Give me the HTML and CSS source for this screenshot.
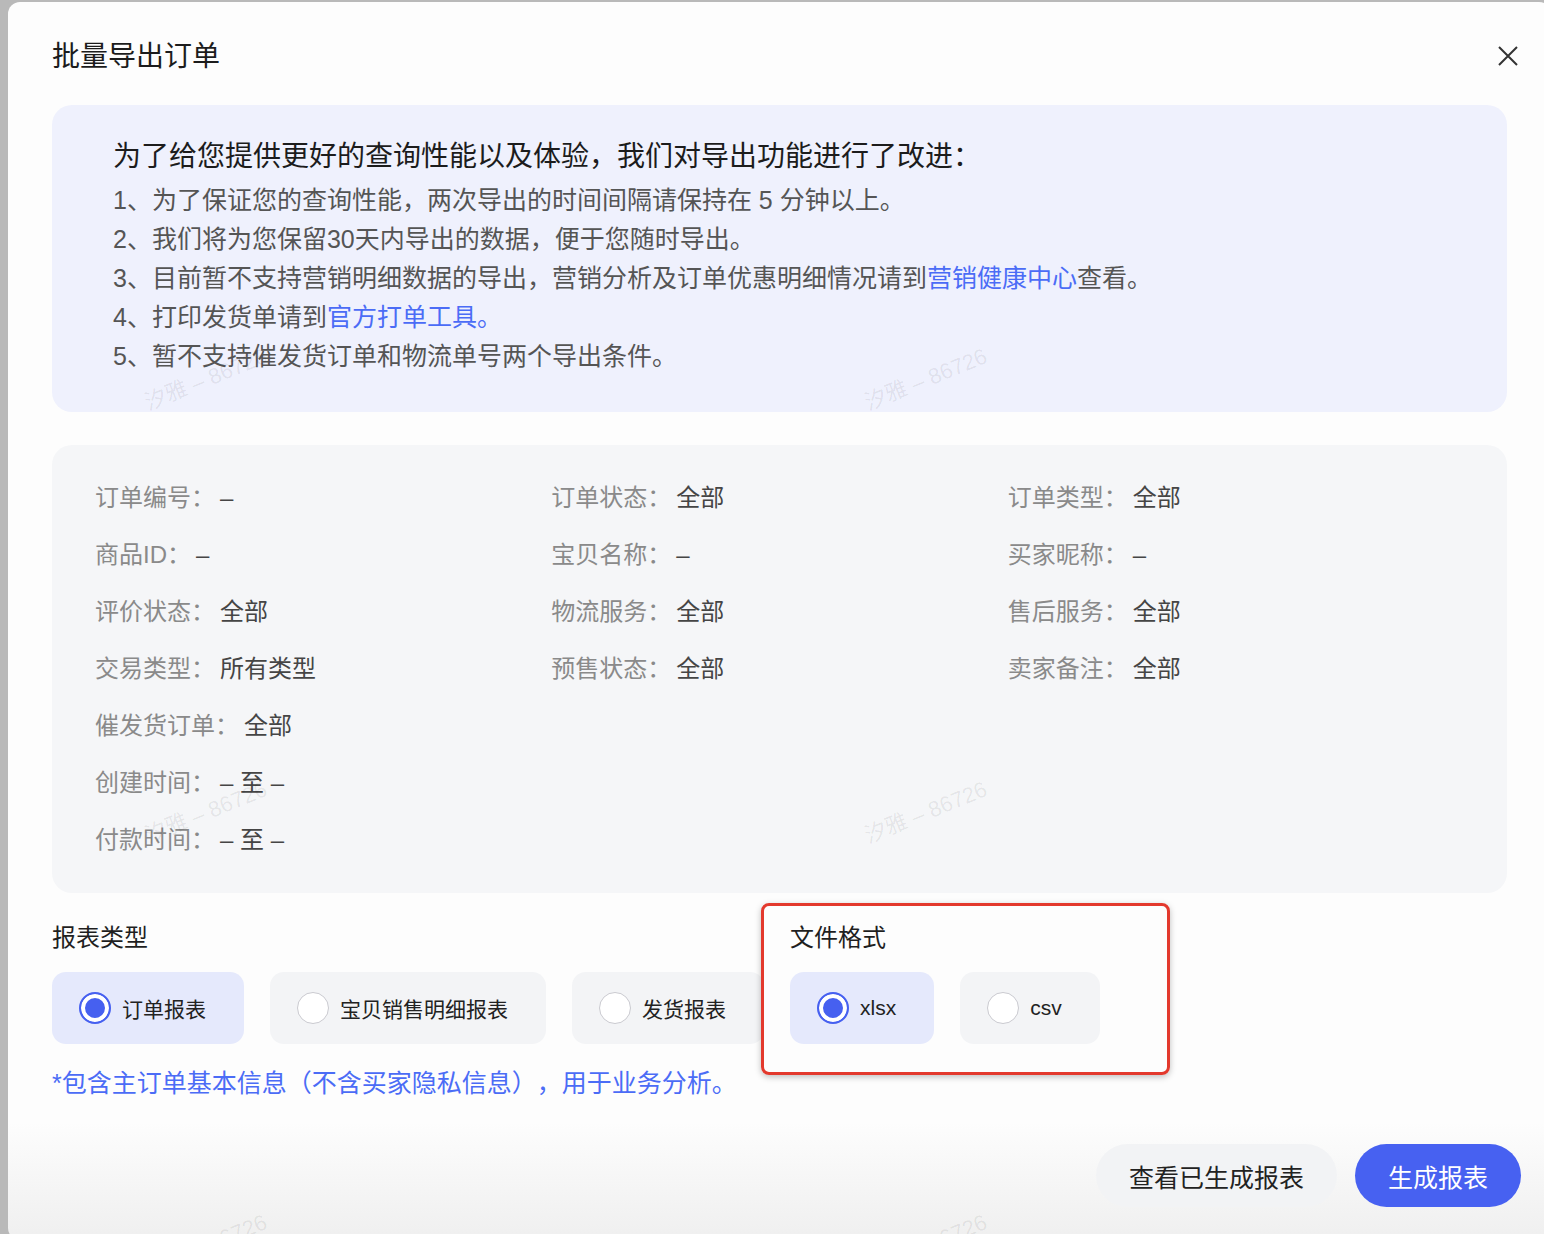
FILE: index.html
```html
<!DOCTYPE html>
<html lang="zh-CN">
  <head>
    <meta charset="UTF-8" />
    <meta name="viewport" content="width=device-width, initial-scale=1.0" />
    <title>批量导出订单</title>
    <link rel="stylesheet" href="styles.css">
  </head>
  <body>
    <div class="modal">
      <div class="modal-header">
        <h2 class="modal-title">批量导出订单</h2>
        <button class="close-btn" aria-label="关闭">
          <svg width="20" height="20" viewBox="0 0 20 20">
            <path d="M1 1 L19 19 M19 1 L1 19" stroke="#333" stroke-width="2" fill="none" />
          </svg>
        </button>
      </div>

      <div class="notice">
        <p class="notice-title">为了给您提供更好的查询性能以及体验，我们对导出功能进行了改进：</p>
        <ul class="notice-list">
          <li>1、为了保证您的查询性能，两次导出的时间间隔请保持在 5 分钟以上。</li>
          <li>2、我们将为您保留30天内导出的数据，便于您随时导出。</li>
          <li>3、目前暂不支持营销明细数据的导出，营销分析及订单优惠明细情况请到<a href="#">营销健康中心</a>查看。</li>
          <li>4、打印发货单请到<a href="#">官方打单工具。</a></li>
          <li>5、暂不支持催发货订单和物流单号两个导出条件。</li>
        </ul>
      </div>

      <div class="filters">
        <div class="filter-item"><span class="filter-label">订单编号：</span><span class="filter-value">–</span></div>
        <div class="filter-item"><span class="filter-label">订单状态：</span><span class="filter-value">全部</span></div>
        <div class="filter-item"><span class="filter-label">订单类型：</span><span class="filter-value">全部</span></div>
        <div class="filter-item"><span class="filter-label">商品ID：</span><span class="filter-value">–</span></div>
        <div class="filter-item"><span class="filter-label">宝贝名称：</span><span class="filter-value">–</span></div>
        <div class="filter-item"><span class="filter-label">买家昵称：</span><span class="filter-value">–</span></div>
        <div class="filter-item"><span class="filter-label">评价状态：</span><span class="filter-value">全部</span></div>
        <div class="filter-item"><span class="filter-label">物流服务：</span><span class="filter-value">全部</span></div>
        <div class="filter-item"><span class="filter-label">售后服务：</span><span class="filter-value">全部</span></div>
        <div class="filter-item"><span class="filter-label">交易类型：</span><span class="filter-value">所有类型</span></div>
        <div class="filter-item"><span class="filter-label">预售状态：</span><span class="filter-value">全部</span></div>
        <div class="filter-item"><span class="filter-label">卖家备注：</span><span class="filter-value">全部</span></div>
        <div class="filter-item full"><span class="filter-label">催发货订单：</span><span class="filter-value">全部</span></div>
        <div class="filter-item full"><span class="filter-label">创建时间：</span><span class="filter-value">– 至 –</span></div>
        <div class="filter-item full"><span class="filter-label">付款时间：</span><span class="filter-value">– 至 –</span></div>
      </div>

      <div class="options">
        <div class="option-group">
          <div class="group-label">报表类型</div>
          <div class="choice-row">
            <label class="choice selected"><span class="radio"></span>订单报表</label>
            <label class="choice"><span class="radio"></span>宝贝销售明细报表</label>
            <label class="choice"><span class="radio"></span>发货报表</label>
          </div>
        </div>
        <div class="option-group format-group">
          <div class="group-label">文件格式</div>
          <div class="choice-row">
            <label class="choice selected"><span class="radio"></span>xlsx</label>
            <label class="choice"><span class="radio"></span>csv</label>
          </div>
        </div>
      </div>

      <p class="report-hint">*包含主订单基本信息（不含买家隐私信息），用于业务分析。</p>

      <div class="modal-footer">
        <button class="btn btn-secondary">查看已生成报表</button>
        <button class="btn btn-primary">生成报表</button>
      </div>

      <!-- watermark layer -->
      <div class="watermarks">
        <span>汐雅 – 86726</span><span>汐雅 – 86726</span>
        <span>汐雅 – 86726</span><span>汐雅 – 86726</span>
        <span>汐雅 – 86726</span><span>汐雅 – 86726</span>
      </div>
    </div>
  </body>
</html>
```

FILE: styles.css
```css
html,
body {
  margin: 0;
  height: 1234px;
  overflow: hidden;
}
body {
  background-color: #b9b9b9;
  font-family: "Liberation Sans", "Noto Sans CJK SC", sans-serif;
  color: #222;
  text-spacing-trim: space-all;
}
.modal {
  position: relative;
  box-sizing: border-box;
  width: 1543px;
  height: 1238px;
  margin: 2px 0 0 8px;
  padding: 35px 44px 0;
  border-radius: 12px;
  overflow: hidden;
  background: linear-gradient(to bottom, #fdfdfd 0, #fdfdfd 1120px, #efefef 1238px);
}
.modal-header {
  display: flex;
  align-items: center;
  justify-content: space-between;
  margin-bottom: 28px;
}
.modal-title {
  margin: 0;
  font-size: 28px;
  line-height: 40px;
  font-weight: 400;
  color: #1c1c1c;
}
.close-btn {
  display: flex;
  padding: 0;
  margin: -2px -11px 0 0;
  border: none;
  background: none;
  cursor: pointer;
}
.notice {
  padding: 32px 61px 36px;
  border-radius: 20px;
  background-color: #eff1fd;
}
.notice-title {
  margin: 0 0 4px;
  font-size: 28px;
  line-height: 40px;
  color: #1c1c1c;
}
.notice-list {
  margin: 0;
  padding: 0;
  list-style: none;
  font-size: 25px;
  line-height: 39px;
  color: #555;
}
.notice-list a {
  color: #4b6cf6;
  text-decoration: none;
}
.filters {
  display: grid;
  grid-template-columns: repeat(3, 1fr);
  margin-top: 33px;
  padding: 24px 43px 25px;
  border-radius: 20px;
  background-color: #f5f6f8;
  font-size: 24px;
  line-height: 57px;
}
.filter-item.full {
  grid-column: 1 / -1;
}
.filter-label {
  color: #8a8a8a;
  margin-right: 5px;
}
.filter-value {
  color: #454545;
}
.options {
  display: flex;
  gap: 26px;
  margin-top: 28px;
}
.group-label {
  font-size: 24px;
  line-height: 34px;
  margin-bottom: 17px;
  color: #1f1f1f;
}
.choice-row {
  display: flex;
  gap: 26px;
}
.choice {
  display: flex;
  align-items: center;
  gap: 11px;
  height: 72px;
  padding: 0 38px 0 27px;
  border-radius: 14px;
  background-color: #f3f4f6;
  font-size: 21px;
  color: #222;
  cursor: pointer;
}
.choice.selected {
  background-color: #e5e9fc;
}
.radio {
  flex: none;
  box-sizing: border-box;
  width: 32px;
  height: 32px;
  border: 1.5px solid #cacad0;
  border-radius: 50%;
  background-color: #fff;
}
.choice.selected .radio {
  border: 2px solid #4660f0;
  background-color: #4660f0;
  box-shadow: inset 0 0 0 4px #fff;
}
/* red annotation drawn round the file format group */
.format-group {
  position: relative;
}
.format-group::after {
  content: "";
  position: absolute;
  top: -18px;
  left: -29px;
  right: -70px;
  bottom: -31px;
  border: 3px solid #e3392d;
  border-radius: 8px;
  box-shadow: 0 2px 6px rgba(0, 0, 0, 0.25);
  pointer-events: none;
}
.report-hint {
  margin: 21px 0 0;
  font-size: 25px;
  line-height: 36px;
  color: #4b6cf6;
}
.modal-footer {
  display: flex;
  justify-content: flex-end;
  gap: 18px;
  margin: 43px -14px 0 0;
}
.btn {
  height: 63px;
  padding: 0 33px;
  border: none;
  border-radius: 32px;
  font-family: inherit;
  font-size: 25px;
  cursor: pointer;
}
.btn-secondary {
  background-color: #f2f3f5;
  color: #222;
}
.btn-primary {
  background-color: #4761f1;
  color: #fff;
}
.watermarks {
  position: absolute;
  top: 158px;
  left: -163px;
  display: grid;
  grid-template-columns: repeat(2, 720px);
  grid-auto-rows: 433px;
  place-items: center;
  pointer-events: none;
}
.watermarks span {
  font-size: 22px;
  color: rgba(0, 0, 0, 0.08);
  transform: rotate(-22deg);
  white-space: nowrap;
}
```
